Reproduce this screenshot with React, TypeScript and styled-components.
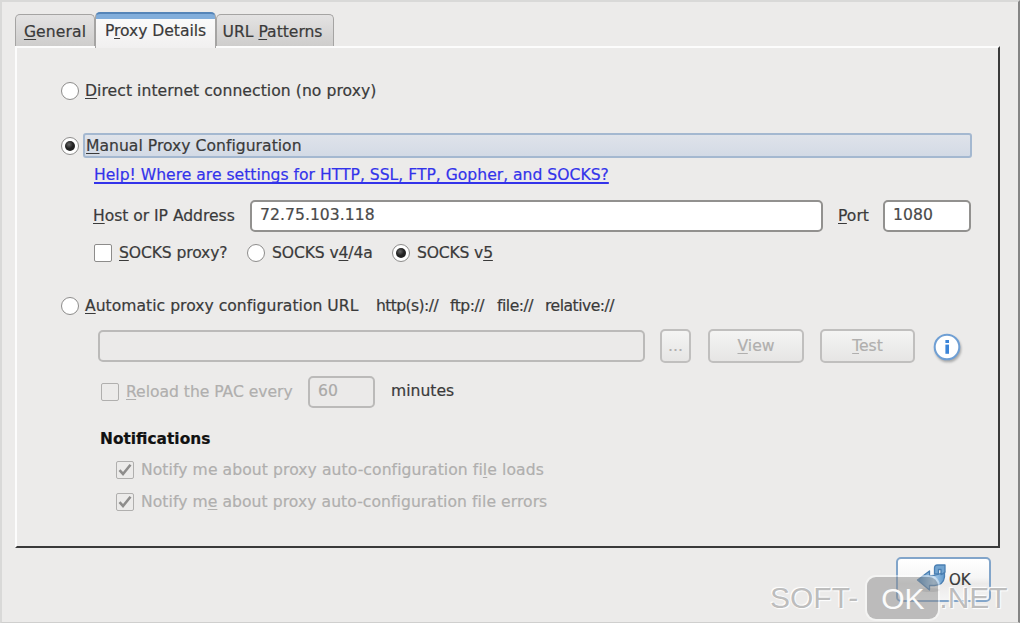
import React from 'react'
import styled, { createGlobalStyle } from 'styled-components'

const GlobalStyle = createGlobalStyle`
*{
  box-sizing:border-box;
}
body{
  margin:0;
  overflow:hidden;
}
u{
  text-decoration-thickness:1px;
  text-underline-offset:2px;
  text-decoration-skip-ink:none;
}
`

const Window = styled.div`
  position:relative;
  width:1020px;
  height:623px;
  padding:10px 0 0 13px;
  background:#ecebea;
  border:2px solid #d9d9d8;
  border-right-color:#858585;
  border-bottom:1px solid #cfcfce;
  font-family:"DejaVu Sans", sans-serif;
  font-size:15.6px;
  color:#3a3a3a;
  -webkit-text-stroke:0.2px;
`

const Tabs = styled.div`
  display:flex;
  align-items:flex-end;
  height:34px;
`

const Tab = styled.div<{ $width: number, $active?: boolean }>`
  display:flex;
  align-items:center;
  justify-content:center;
  width:${p => p.$width}px;
  height:${p => p.$active ? 36 : 32}px;
  margin-bottom:${p => p.$active ? -2 : 0}px;
  padding-top:${p => p.$active ? 0 : 3}px;
  padding-bottom:${p => p.$active ? 1 : 0}px;
  border:1px solid #a5a4a3;
  border-top:${p => p.$active ? '2px solid #5585b8' : '1px solid #a5a4a3'};
  border-bottom:0;
  border-radius:5px 5px 0 0;
  background:${p => p.$active
    ? 'linear-gradient(#82aedb 0 5px, #fafafa 5px, #f1f0f0)'
    : 'linear-gradient(#e4e3e3, #cecdcc)'};
  z-index:${p => p.$active ? 1 : 0};
`

const Panel = styled.div`
  width:985px;
  height:502px;
  padding:28px 0 0 42px;
  border:2px solid #fcfcfc;
  border-right-color:#3a3a3a;
  border-bottom-color:#3a3a3a;
`

const Row = styled.div<{ $height?: number, $top?: number, $indent?: number }>`
  display:flex;
  align-items:center;
  height:${p => p.$height || 30}px;
  margin-top:${p => p.$top || 0}px;
  padding-left:${p => p.$indent || 0}px;
`

const Text = styled.div<{ $width?: number, $gap?: number, $spacing?: number, $lift?: number, $off?: boolean }>`
  flex:none;
  width:${p => p.$width ? p.$width + 'px' : 'auto'};
  margin-left:${p => p.$gap || 0}px;
  padding-bottom:${p => p.$lift || 0}px;
  letter-spacing:${p => p.$spacing || 0}px;
  line-height:20px;
  white-space:nowrap;
  color:${p => p.$off ? '#b0afae' : 'inherit'};
`

const HelpLink = styled.a`
  padding-top:1px;
  color:#3333ea;
  white-space:nowrap;
  text-decoration:underline;
  text-decoration-thickness:1.5px;
  text-underline-offset:2px;
  text-decoration-skip-ink:none;
`

const Heading = styled.div`
  padding-top:2px;
  font-weight:bold;
  font-size:15.4px;
  color:#111;
`

const RadioCircle = styled.div`
  display:flex;
  flex:none;
  align-items:center;
  justify-content:center;
  width:18px;
  height:18px;
  border:1.5px solid #8d8c8b;
  border-radius:50%;
  background:#fff;
`

const Dot = styled.div`
  width:10px;
  height:10px;
  border-radius:50%;
  background:radial-gradient(circle at 40% 35%, #666, #222 45%);
`

const Box = styled.div<{ $off?: boolean }>`
  flex:none;
  width:18px;
  height:18px;
  border:1.5px solid ${p => p.$off ? '#b0afae' : '#8d8c8b'};
  border-radius:2px;
  background:${p => p.$off ? '#ecebea' : '#fff'};
  svg{
    display:block;
  }
`

const Focus = styled.div`
  display:flex;
  align-items:center;
  width:889px;
  height:25px;
  margin-left:4px;
  padding-left:1px;
  border:2px solid #a4b8d0;
  border-radius:3px;
  background:linear-gradient(#dfe3ea, #d3dae5);
`

const Field = styled.div<{ $width: number, $off?: boolean }>`
  flex:none;
  width:${p => p.$width}px;
  height:32px;
  padding-left:8px;
  line-height:27px;
  letter-spacing:0.05px;
  border:2px solid ${p => p.$off ? '#bbbab9' : '#92918f'};
  border-radius:5px;
  background:${p => p.$off ? '#ebeae9' : '#fff'};
  color:${p => p.$off ? '#aaa9a8' : '#4a4a4a'};
`

const Button = styled.div<{ $width: number, $gap: number }>`
  flex:none;
  width:${p => p.$width}px;
  height:34px;
  margin-left:${p => p.$gap}px;
  line-height:30px;
  text-align:center;
  border:2px solid #c0bfbe;
  border-radius:5px;
  background:linear-gradient(#f4f4f3, #e6e5e4);
  color:#b0afae;
`

const InfoIcon = styled.svg`
  margin:2px 0 0 17px;
  filter:drop-shadow(1px 2px 1px #aaa);
`

const Footer = styled.div`
  display:flex;
  justify-content:flex-end;
  padding:9px 27px 0 0;
`

const OkButton = styled.div`
  display:flex;
  align-items:center;
  width:95px;
  height:45px;
  padding-left:18px;
  border:2px solid #82a5ca;
  border-radius:5px;
  background:linear-gradient(#fff, #f6f6f6 45%, #ebeae9 60%, #f5f5f5);
  svg{
    flex:none;
    margin-top:-4px;
  }
  span{
    margin-left:1px;
    font-size:15px;
  }
`

const Watermark = styled.div`
  position:absolute;
  left:768px;
  top:575px;
  display:flex;
  align-items:center;
  font:30px "Liberation Sans", sans-serif;
  color:rgba(160,160,160,0.7);
  -webkit-text-stroke:0;
  text-shadow:0 0 2px #fff, 1px 1px 1px #fff, -1px -1px 1px #fff;
`

const Badge = styled.div`
  width:71px;
  height:42px;
  margin:0 1px 0 9px;
  border-radius:9px;
  background:rgba(140,140,140,0.5);
  box-shadow:0 0 0 2px rgba(255,255,255,0.45);
  color:#fbfbfb;
  line-height:43px;
  text-align:center;
  text-shadow:none;
`

const Radio: React.FC<{ checked?: boolean }> = ({ checked }) => (
  <RadioCircle>{checked && <Dot />}</RadioCircle>
)

const CheckedBox: React.FC = () => (
  <Box $off>
    <svg width="16" height="16" viewBox="0 0 16 16" fill="none">
      <path d="M2.5 8.2 6 12 13.5 2.8" stroke="#8e8d8c" strokeWidth="2.6" />
    </svg>
  </Box>
)

const App: React.FC = () => {

  return (
    <Window>
      <GlobalStyle />
      <Tabs>
        <Tab $width={80}><Text $spacing={0.1}><u>G</u>eneral</Text></Tab>
        <Tab $width={121} $active><Text $spacing={-0.05}>P<u>r</u>oxy Details</Text></Tab>
        <Tab $width={118}><Text $spacing={-0.02}>URL <u>P</u>atterns&nbsp;</Text></Tab>
      </Tabs>
      <Panel>
        <Row $indent={2}>
          <Radio />
          <Text $gap={6} $spacing={0.06}><u>D</u>irect internet connection (no proxy)</Text>
        </Row>
        <Row $top={27} $height={25} $indent={2}>
          <Radio checked />
          <Focus><Text $spacing={0.02}><u>M</u>anual Proxy Configuration</Text></Focus>
        </Row>
        <Row $height={32} $indent={35}>
          <HelpLink>Help! Where are settings for HTTP, SSL, FTP, Gopher, and SOCKS?</HelpLink>
        </Row>
        <Row $top={10} $height={32} $indent={34}>
          <Text $width={157} $lift={1} $spacing={-0.04}><u>H</u>ost or IP Address</Text>
          <Field $width={573}>72.75.103.118</Field>
          <Text $gap={15} $width={45} $lift={1}><u>P</u>ort</Text>
          <Field $width={88}>1080</Field>
        </Row>
        <Row $top={6} $indent={35}>
          <Box />
          <Text $gap={7} $width={128} $spacing={-0.12}><u>S</u>OCKS proxy?</Text>
          <Radio />
          <Text $gap={7} $width={120} $spacing={-0.12}>SOCKS v<u>4</u>/4a</Text>
          <Radio checked />
          <Text $gap={7} $spacing={-0.18}>SOCKS v<u>5</u></Text>
        </Row>
        <Row $top={23} $indent={2}>
          <Radio />
          <Text $gap={6} $width={291} $spacing={0.02}><u>A</u>utomatic proxy configuration URL</Text>
          <Text $width={74} $lift={1} $spacing={-0.6}>http(s)://</Text>
          <Text $width={47} $lift={1} $spacing={-0.5}>ftp://</Text>
          <Text $width={48} $lift={1} $spacing={-0.5}>file://</Text>
          <Text $lift={1} $spacing={-0.5}>relative://</Text>
        </Row>
        <Row $top={8} $height={34} $indent={39}>
          <Field $width={547} $off />
          <Button $width={31} $gap={15}>...</Button>
          <Button $width={96} $gap={17}><u>V</u>iew</Button>
          <Button $width={95} $gap={16}><u>T</u>est</Button>
          <InfoIcon width="30" height="30" viewBox="0 0 30 30">
            <circle cx="15" cy="15" r="12.3" fill="#fff" stroke="#6f9fd4" strokeWidth="2" />
            <rect x="13.4" y="8" width="3.6" height="3" fill="#3c85d8" />
            <rect x="13.4" y="12.6" width="3.6" height="9.2" fill="#3c85d8" />
          </InfoIcon>
        </Row>
        <Row $top={13} $height={32} $indent={42}>
          <Box $off />
          <Text $gap={7} $width={182} $spacing={-0.03} $off><u>R</u>eload the PAC every</Text>
          <Field $width={67} $off>60</Field>
          <Text $gap={16} $lift={2}>minutes</Text>
        </Row>
        <Row $top={15} $indent={41}>
          <Heading>Notifications</Heading>
        </Row>
        <Row $top={2} $indent={57}>
          <CheckedBox />
          <Text $gap={7} $spacing={0.08} $off>Notify me about proxy auto-configuration fi<u>l</u>e loads</Text>
        </Row>
        <Row $top={2} $indent={57}>
          <CheckedBox />
          <Text $gap={7} $spacing={0.06} $off>Notify m<u>e</u> about proxy auto-configuration file errors</Text>
        </Row>
      </Panel>
      <Footer>
        <OkButton>
          <svg width="32" height="30" viewBox="0 0 32 30">
            <defs>
              <linearGradient id="arrow" x1="0" y1="0" x2="1" y2="0">
                <stop offset="0" stopColor="#3f7db6" />
                <stop offset=".6" stopColor="#a9cbe8" />
                <stop offset="1" stopColor="#5d97cb" />
              </linearGradient>
            </defs>
            <ellipse cx="14" cy="27" rx="10" ry="2" fill="#d3d3d3" />
            <path d="M1.500 17 13.500 8v4.500Q21 13 28.500 8.500V14q-1 8-10 8.500h-5V27Z" fill="url(#arrow)" stroke="#4a7fb2" strokeWidth="1.3" strokeLinejoin="round" />
            <path d="M18.500 11V5q0-3 3-3h7.500v7q-1.500 2-4 2.500V6.500h-2.500V11Z" fill="#72a4d0" stroke="#4a7fb2" strokeWidth="1.3" strokeLinejoin="round" />
          </svg>
          <span>OK</span>
        </OkButton>
      </Footer>
      <Watermark>SOFT-<Badge>OK</Badge>.NET</Watermark>
    </Window>
  )
}

export default App
